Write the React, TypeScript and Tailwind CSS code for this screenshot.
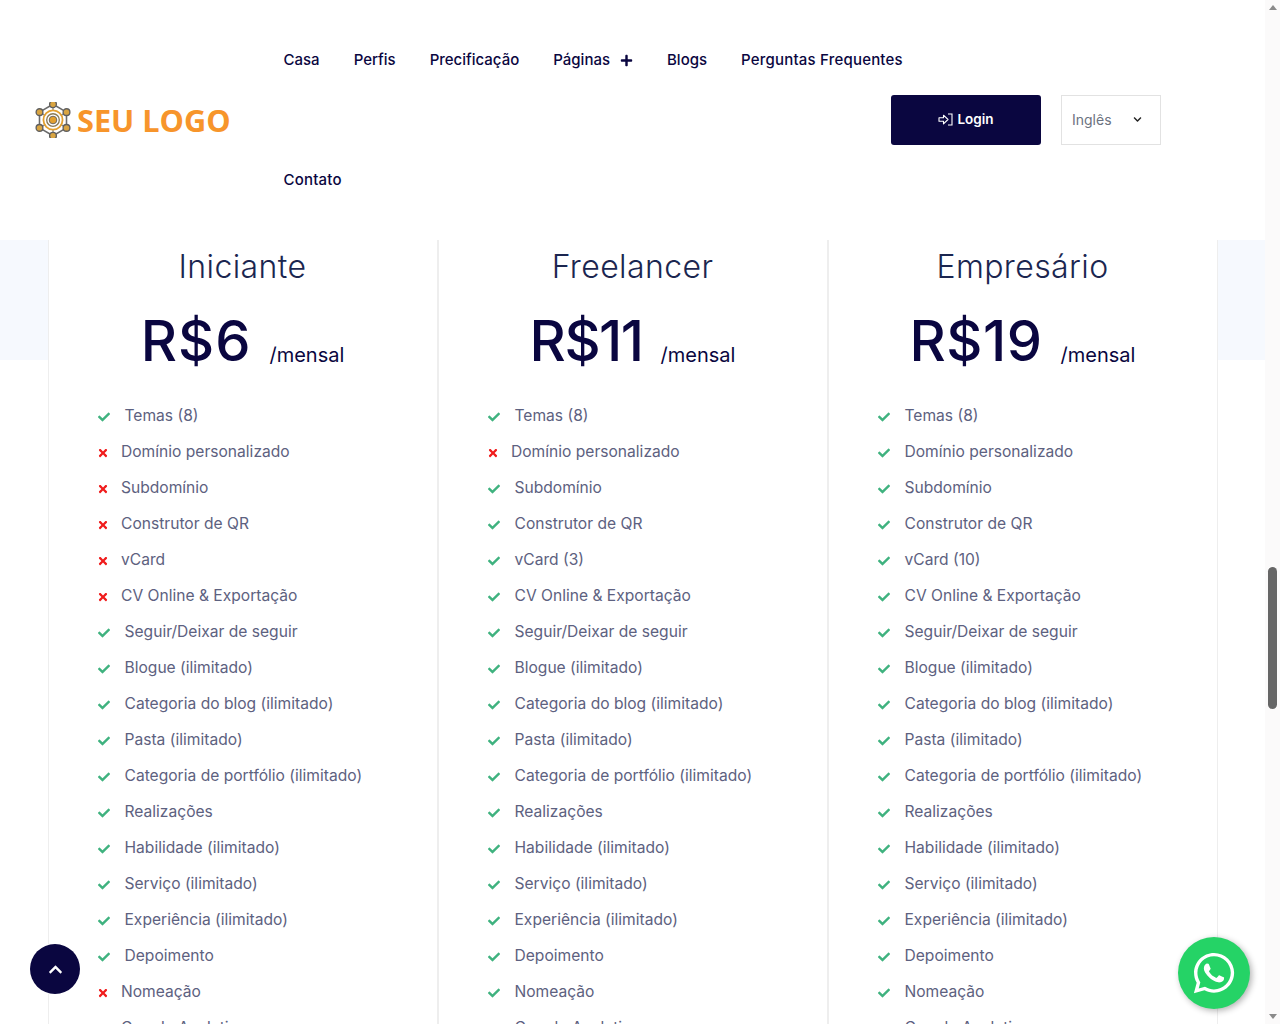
import React from 'react';
import { FaCheck, FaTimes, FaPlus, FaChevronUp, FaChevronDown, FaWhatsapp } from 'react-icons/fa';

type Feature = { label: string; on: boolean };

const labels = [
  'Temas (8)',
  'Domínio personalizado',
  'Subdomínio',
  'Construtor de QR',
  'vCard',
  'CV Online & Exportação',
  'Seguir/Deixar de seguir',
  'Blogue (ilimitado)',
  'Categoria do blog (ilimitado)',
  'Pasta (ilimitado)',
  'Categoria de portfólio (ilimitado)',
  'Realizações',
  'Habilidade (ilimitado)',
  'Serviço (ilimitado)',
  'Experiência (ilimitado)',
  'Depoimento',
  'Nomeação',
  'Google Analytics',
];

const buildFeatures = (off: string[], rename: Record<string, string> = {}): Feature[] =>
  labels.map(label => ({ label: rename[label] || label, on: !off.includes(label) }));

const plans = [
  {
    name: 'Iniciante',
    price: 'R$6',
    priceClass: 'tracking-[1px]',
    features: buildFeatures(['Domínio personalizado', 'Subdomínio', 'Construtor de QR', 'vCard', 'CV Online & Exportação', 'Nomeação', 'Google Analytics']),
  },
  {
    name: 'Freelancer',
    price: 'R$11',
    priceClass: 'tracking-[-1.5px]',
    features: buildFeatures(['Domínio personalizado'], { vCard: 'vCard (3)' }),
  },
  {
    name: 'Empresário',
    price: 'R$19',
    priceClass: 'tracking-[0.5px]',
    features: buildFeatures([], { vCard: 'vCard (10)' }),
  },
];

const LogoMark = () => {
  const nodes = [[18, 4], [30, 11], [30, 25], [18, 32], [6, 25], [6, 11]];
  return (
    <svg width="36" height="36" viewBox="2 2 32 32" className="shrink-0">
      <polygon points="18,4 30,11 30,25 18,32 6,25 6,11" fill="none" stroke="#6b6b6b" strokeWidth="1.4" />
      {nodes.map(([x, y]) => (
        <line key={`l${x}${y}`} x1="18" y1="18" x2={x} y2={y} stroke="#8a8a8a" strokeWidth="1.2" />
      ))}
      {nodes.map(([x, y]) => (
        <g key={`n${x}${y}`}>
          <circle cx={x} cy={y} r="3" fill="#d9a441" stroke="#5f5f5f" strokeWidth="1.2" />
        </g>
      ))}
      <circle cx="18" cy="18" r="8.5" fill="#fff" stroke="#e3a02f" strokeWidth="1.6" />
      <circle cx="18" cy="18" r="5.6" fill="#fff" stroke="#8a7a55" strokeWidth="1.2" />
      <circle cx="18" cy="18" r="3.4" fill="#e3a02f" stroke="#5f5f5f" strokeWidth="0.8" />
    </svg>
  );
};

const LoginIcon = () => (
  <svg width="15" height="13" viewBox="0 0 15 13" fill="none" stroke="currentColor" strokeWidth="1.1" className="shrink-0">
    <path d="M1 4.8h4.5V2.2L10 6.5l-4.5 4.3V8.2H1z" strokeLinejoin="round" />
    <path d="M10 1h4v11h-4" />
  </svg>
);

const PlanColumn = ({ plan }: { plan: (typeof plans)[number] }) => (
  <div className="h-[900px] border-x border-[#eeeeee] bg-white px-[49px]">
    <h3 className="h-[52px] text-center font-['Inter',sans-serif] text-[32px] leading-[54px] font-light tracking-[0.4px] text-[#1b2650]">{plan.name}</h3>
    <div className="mt-[19px] flex h-[60px] items-end justify-center gap-[18px] font-['Inter',sans-serif] text-[#0a0640]">
      <span className={`text-[56px] leading-[60px] font-medium ${plan.priceClass}`}>{plan.price}</span>
      <span className="text-[20px] leading-[32px]">/mensal</span>
    </div>
    <ul className="mt-[27px]">
      {plan.features.map(f => (
        <li key={f.label} className="flex h-9 items-center font-['Inter',sans-serif] text-[15.6px] text-[#5d6180]">
          {f.on ? (
            <>
              <FaCheck className="mt-[2px] w-3 h-3 shrink-0 text-[#3fb27f]" />
              <span className="ml-[15px]">{f.label}</span>
            </>
          ) : (
            <>
              <FaTimes className="mt-[2px] w-[10px] h-[12px] shrink-0 text-[#f01c1c]" />
              <span className="ml-[13.5px]">{f.label}</span>
            </>
          )}
        </li>
      ))}
    </ul>
  </div>
);

const App: React.FC = () => {
  return (
    <div className="relative flex h-[1024px] overflow-hidden bg-white">
      <div className="w-[1265px] shrink-0">
        <header className="flex h-60 items-center">
          <div className="ml-[35px] flex w-[248.5px] shrink-0 items-center gap-[6px]">
            <LogoMark />
            <span className="font-['Open_Sans',sans-serif] text-[30.7px] leading-none font-bold whitespace-nowrap text-[#f7952b]">SEU LOGO</span>
          </div>
          <nav className="-mr-[32.5px] flex w-[640px] shrink-0 flex-wrap gap-x-[34px] font-['Inter',sans-serif] text-[15px] font-medium text-[#0a0640]">
            <a className="leading-[120px]">Casa</a>
            <a className="leading-[120px]">Perfis</a>
            <a className="leading-[120px]">Precificação</a>
            <a className="flex items-center gap-[10px] leading-[120px]">Páginas <FaPlus className="w-[13px] h-[13px]" /></a>
            <a className="leading-[120px]">Blogs</a>
            <a className="leading-[120px] tracking-[0.2px]">Perguntas Frequentes</a>
            <a className="leading-[120px] tracking-[0.2px]">Contato</a>
          </nav>
          <button className="flex h-[50px] w-[150px] items-center justify-center gap-1 rounded-[3px] bg-[#0a0640] pb-[2px] font-['Inter',sans-serif] text-[13.5px] font-semibold text-white">
            <LoginIcon />
            Login
          </button>
          <div className="ml-5 flex h-[50px] w-[100px] items-center justify-between border border-[#e2e2e2] pr-[18px] pb-[1px] pl-[10px] font-['Inter',sans-serif] text-[14px] text-[#6b7280]">
            Inglês
            <FaChevronDown className="h-[9px] w-[9px] text-[#222]" />
          </div>
        </header>

        <section className="bg-[linear-gradient(#f6f9fe_120px,#ffffff_120px)]">
          <div className="mx-auto grid w-[1170px] grid-cols-3">
            {plans.map(plan => (
              <PlanColumn key={plan.name} plan={plan} />
            ))}
          </div>
        </section>
      </div>

      {/* page scrollbar */}
      <div className="flex h-full w-[15px] flex-col items-center justify-between bg-[#fbfafa] py-[5px]">
        <div className="h-0 w-0 border-x-[4.5px] border-b-[5px] border-x-transparent border-b-[#8a8a8a]" />
        <div className="h-0 w-0 border-x-[4.5px] border-t-[5px] border-x-transparent border-t-[#8a8a8a]" />
      </div>
      <div className="absolute top-[567px] left-[1268px] h-[142px] w-[9px] rounded-full bg-[#666666]" />

      <button className="absolute top-[944px] left-[30px] flex h-[50px] w-[50px] items-center justify-center rounded-full bg-[#0a0640] text-white">
        <FaChevronUp className="h-[15px] w-[15px]" />
      </button>
      <a className="absolute top-[937px] left-[1178px] flex h-[72px] w-[72px] items-center justify-center rounded-full bg-[#25d366] text-white shadow-[2px_2px_6px_rgba(0,0,0,0.3)]">
        <FaWhatsapp className="h-[46px] w-[46px]" />
      </a>
    </div>
  );
};

export default App;
